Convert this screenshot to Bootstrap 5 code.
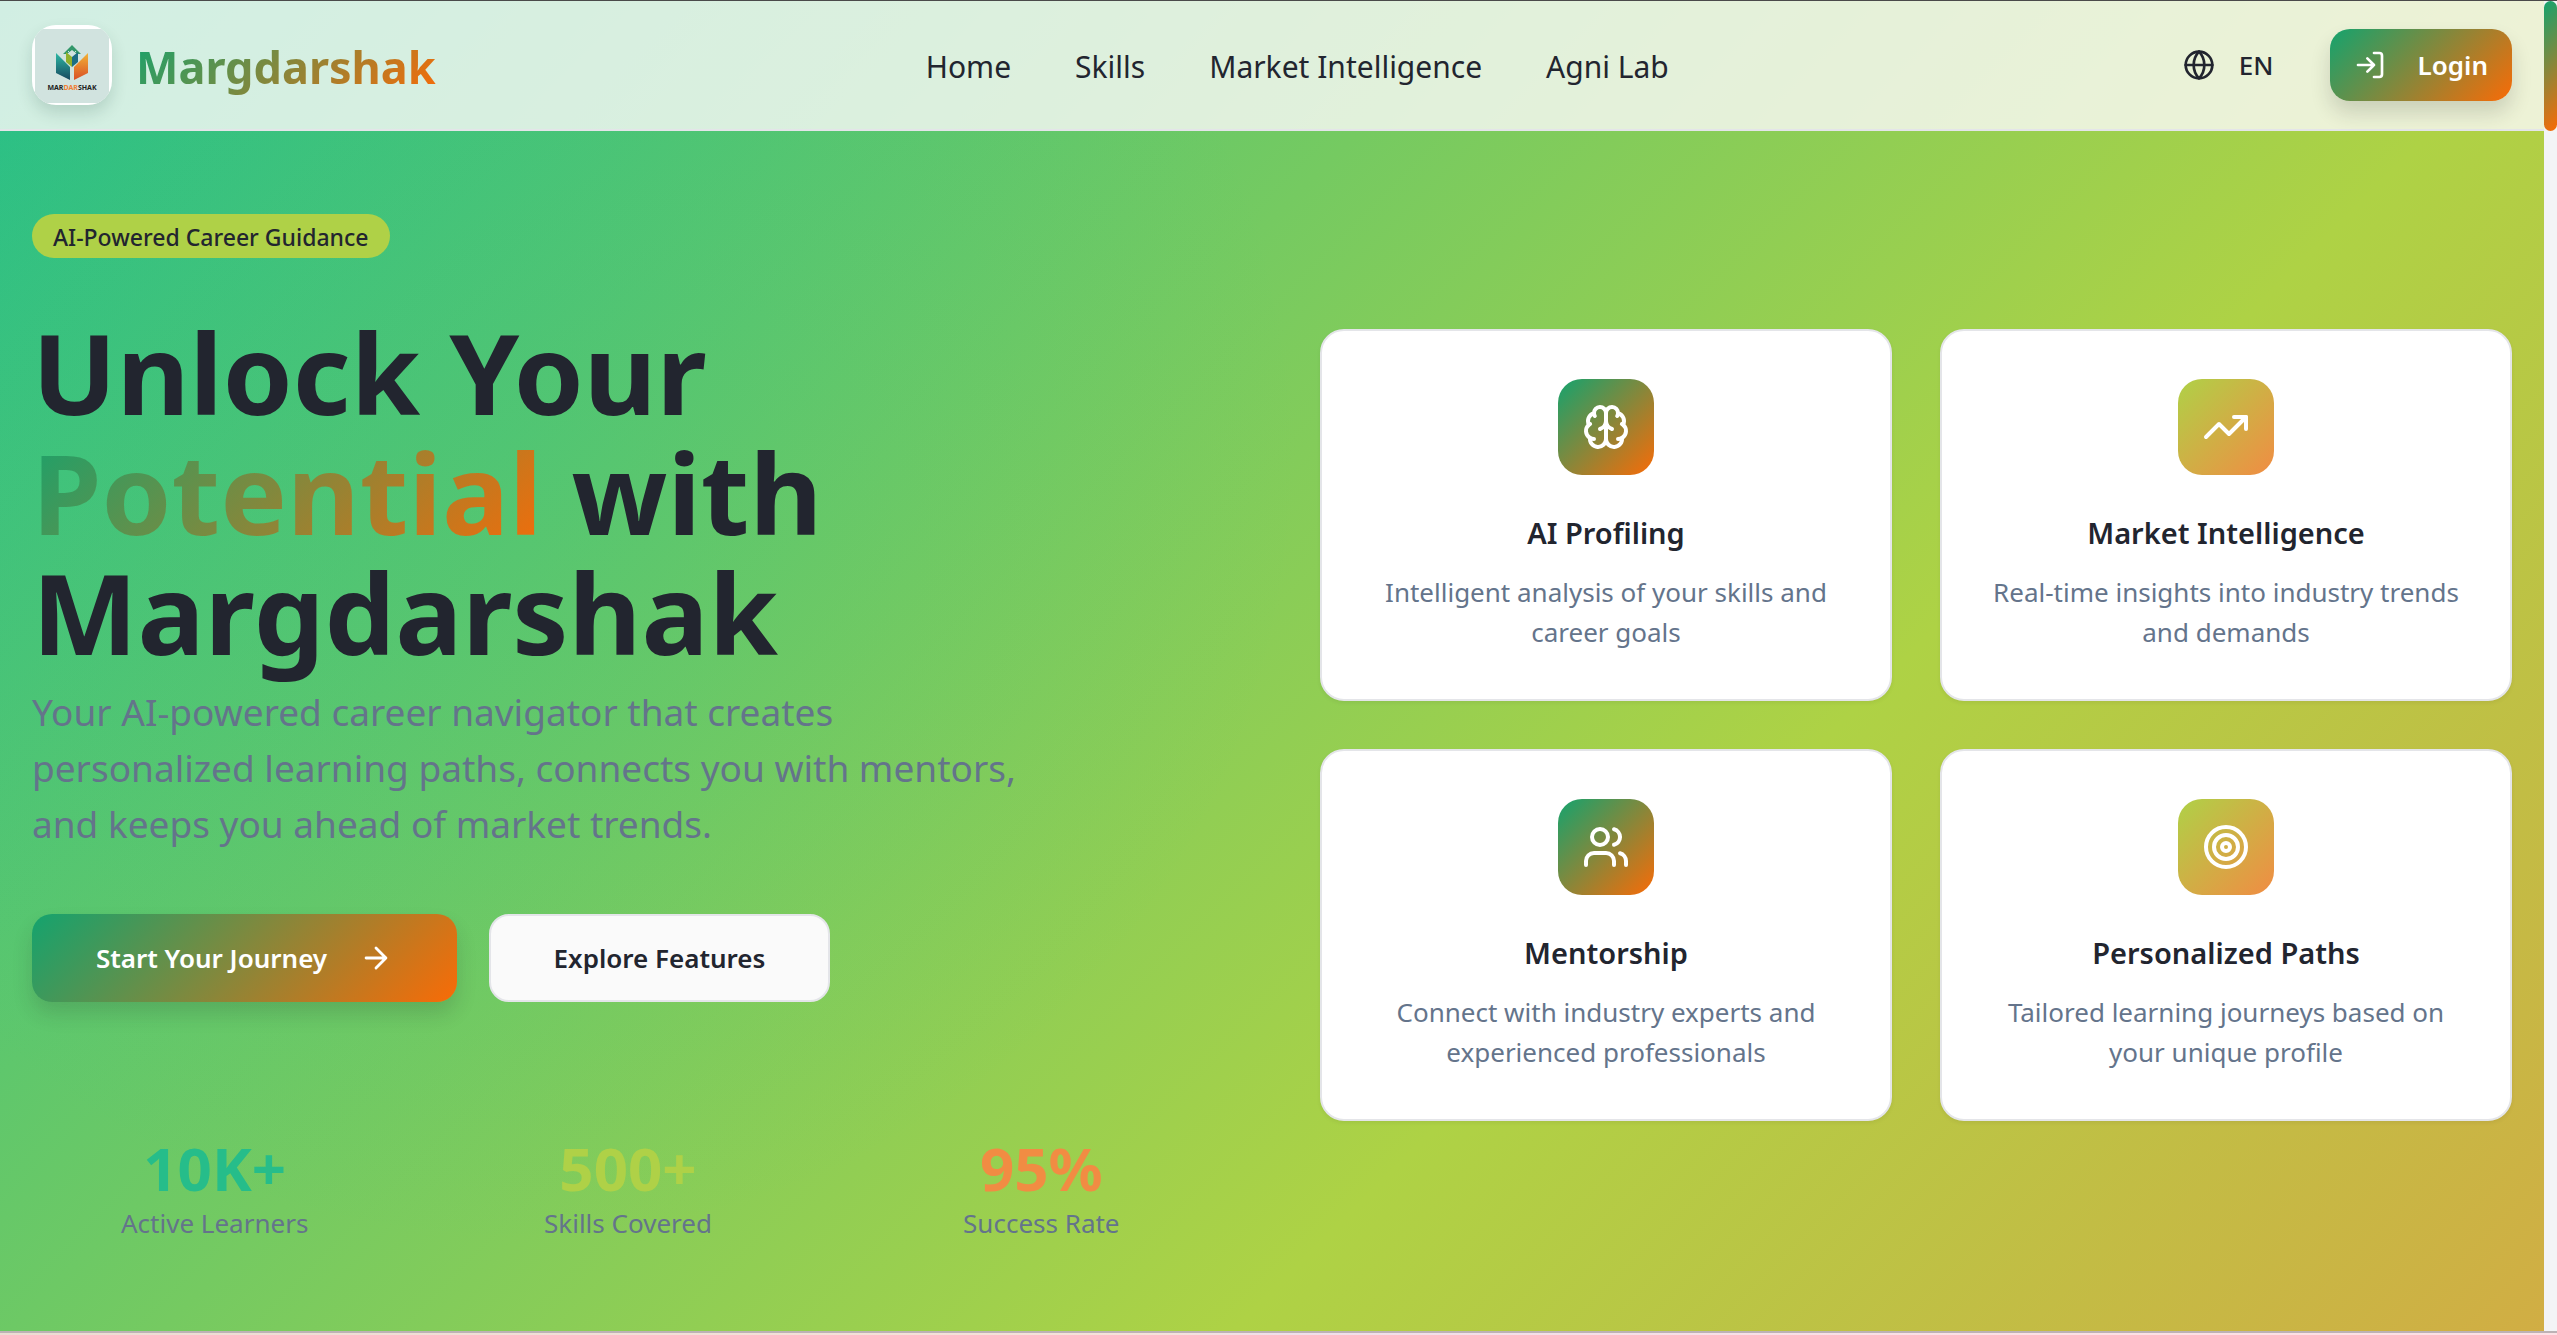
<!DOCTYPE html>
<html lang="en">
<head>
<meta charset="utf-8">
<meta name="viewport" content="width=device-width, initial-scale=1">
<title>Margdarshak</title>
<link href="https://cdn.jsdelivr.net/npm/bootstrap@5.3.0/dist/css/bootstrap.min.css" rel="stylesheet">
<style>
  :root {
    --ink: #22252f;
    --muted: #64748b;
    --green: #26bd8a;
    --lime: #afd147;
    --orange: #f18c43;
    --line: #e4e5e9;
    --brand-gradient: linear-gradient(135deg, #14a36e, #f96b07);
    --soft-gradient: linear-gradient(135deg, var(--lime), var(--orange));
  }
  body {
    font-family: "Noto Sans", sans-serif;
    color: var(--ink);
    border-top: 1px solid #4a4a4a;
  }
  .shell { min-height: calc(100vh - 1px); }
  .page-bg {
    min-width: 0;
    background:
      radial-gradient(circle 800px at 20% 34%, rgba(38, 191, 136, .16), rgba(38, 191, 136, 0)),
      linear-gradient(135deg, #26bf88 0, #aed245 1812px, #f18c43 3590px);
  }
  .topbar {
    height: 130px;
    background: rgba(253, 250, 250, .8);
    border-bottom: 2px solid var(--line);
  }
  .brand-mark {
    width: 80px; height: 80px; padding: 4px 3px;
    border-radius: 24px; background: #fff; overflow: hidden;
    box-shadow: 0 8px 16px rgba(20, 60, 50, .16);
  }
  .brand-mark svg { width: 74px; height: 74px; background: #d1e3df; display: block; }
  .brand-name { font-size: 45px; line-height: 64px; padding-top: 4px; }
  .gradient-text {
    background: var(--brand-gradient);
    -webkit-background-clip: text; background-clip: text; color: transparent;
  }
  .main-nav { gap: 64px; font-size: 30px; padding-top: 2px; }
  .main-nav a, .lang { color: var(--ink); }
  .lang { font-size: 26px; gap: 24px; padding: 0 24px; background: none; border: 0; }
  .semi { font-weight: 600; }
  .mid { font-weight: 500; }
  .wide-gap { gap: 32px; }
  .action {
    --bs-btn-border-radius: 20px;
    display: inline-flex; align-items: center; justify-content: center; gap: 32px;
    font-size: 26px; font-weight: 600; border-width: 2px;
  }
  .action-main {
    background: var(--brand-gradient) border-box; border-color: transparent; color: #fff;
    box-shadow: 0 12px 20px rgba(30, 40, 40, .16);
  }
  .action-main:hover { color: #fff; }
  .action-plain { background: #fafafa; border-color: var(--line); color: var(--ink); }
  .login { height: 72px; padding: 0 22px; }
  .tall { height: 88px; }
  .start { width: 425px; }
  .explore { width: 341px; }
  .gutter { padding-left: 32px; padding-right: 32px; }
  .hero { gap: 96px; padding-top: 83px; }
  .hero > div, .stats > div { flex: 1 1 0; min-width: 0; }
  .pill {
    width: fit-content; height: 44px; line-height: 46px; padding: 0 21px;
    border-radius: 22px; background: var(--lime); font-size: 23px;
  }
  .headline { font-size: 112px; line-height: 120px; margin: 54px 0 12px; }
  .pitch { font-size: 37px; line-height: 56px; color: var(--muted); max-width: 1000px; margin: 0 0 62px; }
  .stats { gap: 48px; margin-top: 131px; }
  .stat-value { font-size: 60px; line-height: 70px; }
  .stat-green { color: var(--green); }
  .stat-lime { color: var(--lime); }
  .stat-orange { color: var(--orange); }
  .stat-label, .feature-text { font-size: 26px; line-height: 40px; color: var(--muted); }
  .features { display: grid; grid-template-columns: 1fr 1fr; gap: 48px; margin-top: 115px; }
  .feature {
    border: 2px solid var(--line); border-radius: 24px; padding: 48px 40px 47px;
    box-shadow: 0 2px 4px rgba(0, 0, 0, .06);
  }
  .tile { width: 96px; height: 96px; border-radius: 24px; background: var(--brand-gradient); }
  .tile-soft { background: var(--soft-gradient); }
  .feature-title { font-size: 29px; line-height: 48px; margin: 34px 0 15px; }
  .stroke { fill: none; stroke: currentColor; stroke-width: 2; stroke-linecap: round; stroke-linejoin: round; }
  .track { flex: 0 0 13px; background: #f3f4f6; }
  .thumb { height: 130px; border-radius: 7px; background: var(--brand-gradient); }
  .next-section {
    height: 4px; border-top: 2px solid #bdb2b5;
    background: linear-gradient(90deg, #ecddd3, #f6e3da 45%, #f0e0ea 50%, #fde1e5 80%);
  }
</style>
<script src="https://cdn.jsdelivr.net/npm/bootstrap@5.3.0/dist/js/bootstrap.bundle.min.js"></script>
</head>
<body>
<div class="shell d-flex flex-column">
  <div class="d-flex flex-grow-1">
    <div class="page-bg flex-grow-1">
      <header class="topbar gutter d-flex align-items-center justify-content-between">
        <a href="#" class="d-flex align-items-center gap-4 text-decoration-none">
          <span class="brand-mark">
            <svg viewBox="0 0 74 74" role="img" aria-label="Mardarshak logo">
              <defs>
                <linearGradient id="pageLeft" x2="0" y2="1"><stop stop-color="#2cb8a4"/><stop offset="1" stop-color="#17485f"/></linearGradient>
                <linearGradient id="pageRight" x2="0" y2="1"><stop stop-color="#f2b336"/><stop offset="1" stop-color="#d94f25"/></linearGradient>
              </defs>
              <path d="M21 24l14 14v13l-14-7z" fill="url(#pageLeft)"/>
              <path d="M53 24l-14 14v13l14-7z" fill="url(#pageRight)"/>
              <path d="M37 16l9 9h-4l-5-4-5 4h-4z" fill="#32976a"/>
              <path d="M31 23l6 5v10l-6-5v-7z" fill="#8fb02c"/>
              <path d="M43 23l-6 5v10l6-5v-7z" fill="#1b6d83"/>
              <path d="M33 22l4 4 4-4" fill="none" stroke="#d1e3df"/>
              <text x="37" y="61" text-anchor="middle" font-size="7" font-weight="700" fill="#222">MAR<tspan fill="#ef7f35">DAR</tspan>SHAK</text>
            </svg>
          </span>
          <span class="brand-name gradient-text fw-bold">Margdarshak</span>
        </a>
        <nav class="main-nav d-flex" aria-label="Main">
          <a class="text-decoration-none" href="#">Home</a>
          <a class="text-decoration-none" href="#">Skills</a>
          <a class="text-decoration-none" href="#">Market Intelligence</a>
          <a class="text-decoration-none" href="#">Agni Lab</a>
        </nav>
        <div class="d-flex align-items-center wide-gap">
          <button type="button" class="lang mid d-inline-flex align-items-center">
            <svg class="stroke" width="32" height="32" viewBox="0 0 24 24"><circle cx="12" cy="12" r="10"/><path d="M12 2a14.5 14.5 0 0 0 0 20 14.5 14.5 0 0 0 0-20M2 12h20"/></svg>
            EN
          </button>
          <button type="button" class="btn action action-main login">
            <svg class="stroke" width="32" height="32" viewBox="0 0 24 24"><path d="M15 3h4a2 2 0 0 1 2 2v14a2 2 0 0 1-2 2h-4M10 17l5-5-5-5M15 12H3"/></svg>
            Login
          </button>
        </div>
      </header>

      <main class="hero gutter d-flex">
        <div>
          <div class="pill mid">AI-Powered Career Guidance</div>
          <h1 class="headline fw-bold">Unlock Your<br><span class="gradient-text">Potential</span> with<br>Margdarshak</h1>
          <p class="pitch">Your AI-powered career navigator that creates personalized learning paths, connects you with mentors, and keeps you ahead of market trends.</p>
          <div class="d-flex wide-gap">
            <button type="button" class="btn action action-main tall start">
              Start Your Journey
              <svg class="stroke" width="34" height="34" viewBox="0 0 24 24"><path d="M5 12h14M12 5l7 7-7 7"/></svg>
            </button>
            <button type="button" class="btn action action-plain tall explore">Explore Features</button>
          </div>
          <div class="stats d-flex text-center">
            <div><div class="stat-value stat-green fw-bold">10K+</div><div class="stat-label">Active Learners</div></div>
            <div><div class="stat-value stat-lime fw-bold">500+</div><div class="stat-label">Skills Covered</div></div>
            <div><div class="stat-value stat-orange fw-bold">95%</div><div class="stat-label">Success Rate</div></div>
          </div>
        </div>
        <div>
          <div class="features text-center">
            <section class="card feature align-items-center">
              <div class="tile d-flex align-items-center justify-content-center text-white">
                <svg class="stroke" width="48" height="48" viewBox="0 0 24 24"><path d="M12 5a3 3 0 1 0-5.997.125 4 4 0 0 0-2.526 5.77 4 4 0 0 0 .556 6.588A4 4 0 1 0 12 18Z"/><path d="M12 5a3 3 0 1 1 5.997.125 4 4 0 0 1 2.526 5.77 4 4 0 0 1-.556 6.588A4 4 0 1 1 12 18Z"/><path d="M15 13a4.5 4.5 0 0 1-3-4 4.5 4.5 0 0 1-3 4M17.599 6.5a3 3 0 0 0 .399-1.375M6.003 5.125A3 3 0 0 0 6.401 6.5M3.477 10.896a4 4 0 0 1 .585-.396M19.938 10.5a4 4 0 0 1 .585.396M6 18a4 4 0 0 1-1.967-.516M19.967 17.484A4 4 0 0 1 18 18"/></svg>
              </div>
              <h2 class="feature-title semi">AI Profiling</h2>
              <p class="feature-text m-0">Intelligent analysis of your skills and career goals</p>
            </section>
            <section class="card feature align-items-center">
              <div class="tile tile-soft d-flex align-items-center justify-content-center text-white">
                <svg class="stroke" width="48" height="48" viewBox="0 0 24 24"><path d="M22 7l-8.500 8.500-5-5L2 17"/><path d="M16 7h6v6"/></svg>
              </div>
              <h2 class="feature-title semi">Market Intelligence</h2>
              <p class="feature-text m-0">Real-time insights into industry trends and demands</p>
            </section>
            <section class="card feature align-items-center">
              <div class="tile d-flex align-items-center justify-content-center text-white">
                <svg class="stroke" width="48" height="48" viewBox="0 0 24 24"><path d="M16 21v-2a4 4 0 0 0-4-4H6a4 4 0 0 0-4 4v2"/><circle cx="9" cy="7" r="4"/><path d="M22 21v-2a4 4 0 0 0-3-3.870M16 3.130a4 4 0 0 1 0 7.750"/></svg>
              </div>
              <h2 class="feature-title semi">Mentorship</h2>
              <p class="feature-text m-0">Connect with industry experts and experienced professionals</p>
            </section>
            <section class="card feature align-items-center">
              <div class="tile tile-soft d-flex align-items-center justify-content-center text-white">
                <svg class="stroke" width="48" height="48" viewBox="0 0 24 24"><circle cx="12" cy="12" r="10"/><circle cx="12" cy="12" r="6"/><circle cx="12" cy="12" r="2"/></svg>
              </div>
              <h2 class="feature-title semi">Personalized Paths</h2>
              <p class="feature-text m-0">Tailored learning journeys based on your unique profile</p>
            </section>
          </div>
        </div>
      </main>
    </div>
    <div class="track"><div class="thumb"></div></div>
  </div>
  <div class="next-section"></div>
</div>
</body>
</html>
